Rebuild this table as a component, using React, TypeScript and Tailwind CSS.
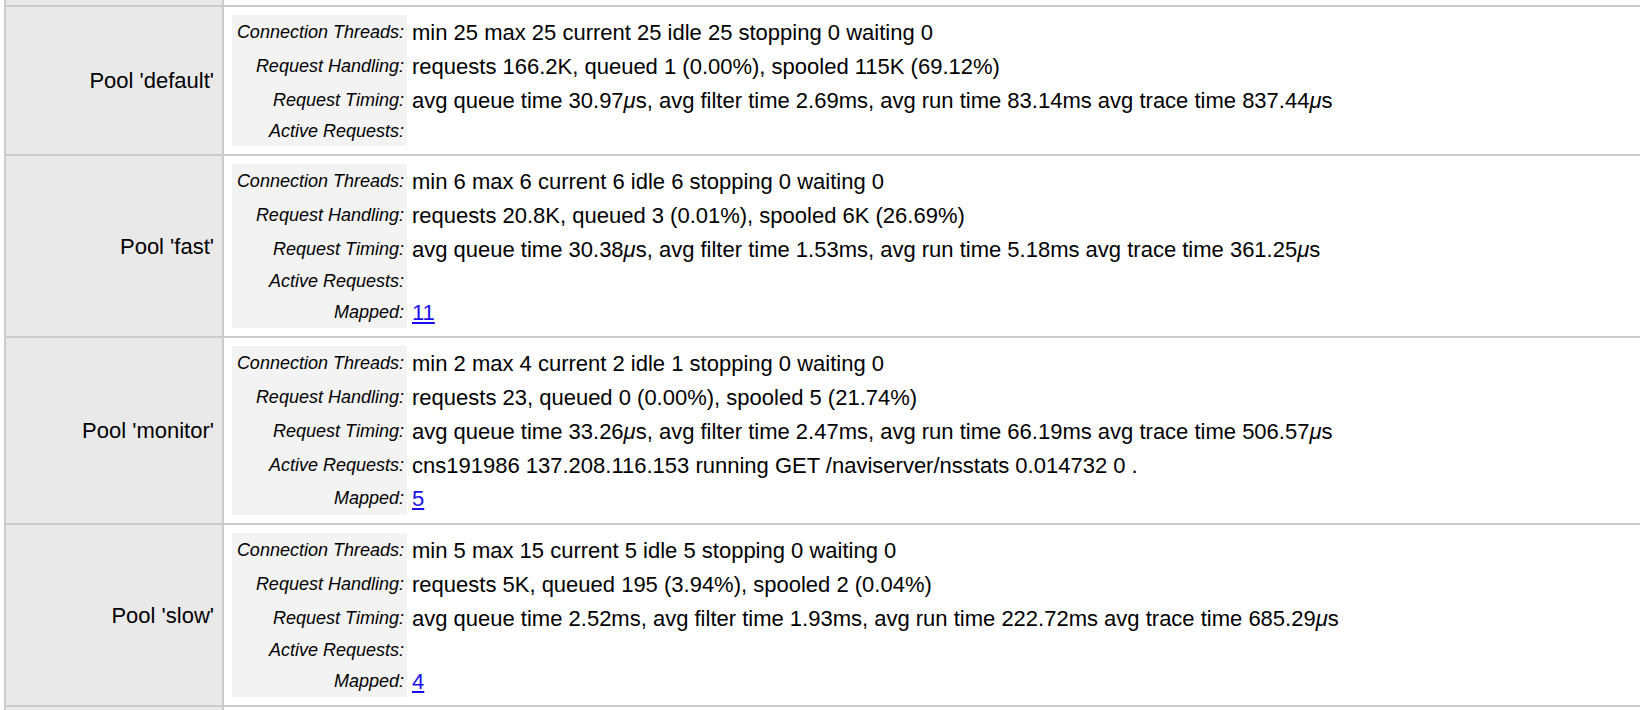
import React from "react";

type Line = { label: string; value?: string; link?: string; h: string };
type Pool = { name: string; lines: Line[] };

const pools: Pool[] = [
  {
    name: "default",
    lines: [
      { label: "Connection Threads", value: "min 25 max 25 current 25 idle 25 stopping 0 waiting 0", h: "h-[34px]" },
      { label: "Request Handling", value: "requests 166.2K, queued 1 (0.00%), spooled 115K (69.12%)", h: "h-[34px]" },
      { label: "Request Timing", value: "avg queue time 30.97μs, avg filter time 2.69ms, avg run time 83.14ms avg trace time 837.44μs", h: "h-[34px]" },
      { label: "Active Requests", h: "h-[29px]" },
    ],
  },
  {
    name: "fast",
    lines: [
      { label: "Connection Threads", value: "min 6 max 6 current 6 idle 6 stopping 0 waiting 0", h: "h-[34px]" },
      { label: "Request Handling", value: "requests 20.8K, queued 3 (0.01%), spooled 6K (26.69%)", h: "h-[34px]" },
      { label: "Request Timing", value: "avg queue time 30.38μs, avg filter time 1.53ms, avg run time 5.18ms avg trace time 361.25μs", h: "h-[34px]" },
      { label: "Active Requests", h: "h-[30px]" },
      { label: "Mapped", link: "11", h: "h-[32px]" },
    ],
  },
  {
    name: "monitor",
    lines: [
      { label: "Connection Threads", value: "min 2 max 4 current 2 idle 1 stopping 0 waiting 0", h: "h-[34px]" },
      { label: "Request Handling", value: "requests 23, queued 0 (0.00%), spooled 5 (21.74%)", h: "h-[34px]" },
      { label: "Request Timing", value: "avg queue time 33.26μs, avg filter time 2.47ms, avg run time 66.19ms avg trace time 506.57μs", h: "h-[34px]" },
      { label: "Active Requests", value: "cns191986 137.208.116.153 running GET /naviserver/nsstats 0.014732 0 .", h: "h-[34px]" },
      { label: "Mapped", link: "5", h: "h-[33px]" },
    ],
  },
  {
    name: "slow",
    lines: [
      { label: "Connection Threads", value: "min 5 max 15 current 5 idle 5 stopping 0 waiting 0", h: "h-[34px]" },
      { label: "Request Handling", value: "requests 5K, queued 195 (3.94%), spooled 2 (0.04%)", h: "h-[34px]" },
      { label: "Request Timing", value: "avg queue time 2.52ms, avg filter time 1.93ms, avg run time 222.72ms avg trace time 685.29μs", h: "h-[34px]" },
      { label: "Active Requests", h: "h-[30px]" },
      { label: "Mapped", link: "4", h: "h-[32px]" },
    ],
  },
];

// the micro sign shows up in italics in the original page
function withMu(text: string) {
  const parts = text.split("μ");
  return parts.map((p, i) => (
    <React.Fragment key={i}>
      {i > 0 && <i>μ</i>}
      {p}
    </React.Fragment>
  ));
}

function PoolRow({ pool }: { pool: Pool }) {
  return (
    <div className="flex border-t-2 border-[#cbcbcb]">
      <div className="flex w-[218px] shrink-0 items-center justify-end border-r-2 border-[#cbcbcb] bg-[#e9e9e9] pr-[8px] text-[22px]">
        Pool '{pool.name}'
      </div>
      <div className="flex-1 p-2">
        <div className="flex flex-col">
          {pool.lines.map((l) => (
            <div key={l.label} className={`flex ${l.h}`}>
              <div className="flex w-[175px] shrink-0 items-center justify-end bg-[#f3f3f3] pr-[3px] text-[18px] italic">
                {l.label}:
              </div>
              <div className="flex items-center whitespace-nowrap pl-[5px] text-[22px]">
                {l.value && withMu(l.value)}
                {l.link && (
                  <a href="#" className="text-[#1a0dee] underline">
                    {l.link}
                  </a>
                )}
              </div>
            </div>
          ))}
        </div>
      </div>
    </div>
  );
}

export default function App() {
  return (
    <div className="h-[710px] overflow-hidden bg-white font-['Liberation_Sans',Arial,sans-serif] text-black">
      <div className="ml-[4px] border-l-2 border-[#cbcbcb]">
        <div className="flex h-[5px]">
          <div className="w-[218px] border-r-2 border-[#cbcbcb] bg-[#e9e9e9]" />
          <div className="flex-1" />
        </div>
        {pools.map((p) => (
          <PoolRow key={p.name} pool={p} />
        ))}
        <div className="flex h-[20px] border-t-2 border-[#cbcbcb]">
          <div className="w-[218px] border-r-2 border-[#cbcbcb] bg-[#e9e9e9]" />
          <div className="flex-1" />
        </div>
      </div>
    </div>
  );
}
